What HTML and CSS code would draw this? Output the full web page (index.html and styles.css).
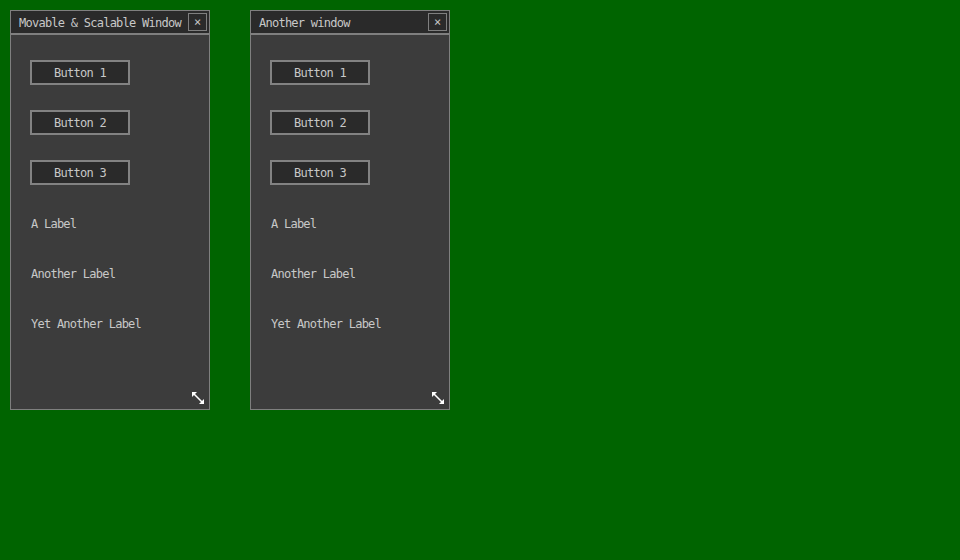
FILE: index.html
```html
<!DOCTYPE html>
<html lang="en">
  <head>
    <meta charset="UTF-8" />
    <title>Windows</title>
    <link rel="stylesheet" href="styles.css">
  </head>
  <body>
    <div class="window win-1">
      <div class="titlebar">
        <span class="title">Movable &amp; Scalable Window</span>
        <span class="close">×</span>
      </div>
      <div class="content">
        <div class="button">Button 1</div>
        <div class="button">Button 2</div>
        <div class="button">Button 3</div>
        <div class="label">A Label</div>
        <div class="label">Another Label</div>
        <div class="label">Yet Another Label</div>
      </div>
      <svg class="resize" width="12" height="12" viewBox="0 0 12 12">
        <line x1="2" y1="2" x2="10" y2="10" stroke="#fff" stroke-width="1.6" />
        <polygon points="0,0 5,0 0,5" fill="#fff" />
        <polygon points="12,12 7,12 12,7" fill="#fff" />
      </svg>
    </div>

    <div class="window win-2">
      <div class="titlebar">
        <span class="title">Another window</span>
        <span class="close">×</span>
      </div>
      <div class="content">
        <div class="button">Button 1</div>
        <div class="button">Button 2</div>
        <div class="button">Button 3</div>
        <div class="label">A Label</div>
        <div class="label">Another Label</div>
        <div class="label">Yet Another Label</div>
      </div>
      <svg class="resize" width="12" height="12" viewBox="0 0 12 12">
        <line x1="2" y1="2" x2="10" y2="10" stroke="#fff" stroke-width="1.6" />
        <polygon points="0,0 5,0 0,5" fill="#fff" />
        <polygon points="12,12 7,12 12,7" fill="#fff" />
      </svg>
    </div>
  </body>
</html>
```

FILE: styles.css
```css
body {
  margin: 0;
  width: 960px;
  height: 560px;
  background: #006400;
  font-family: "DejaVu Sans Mono", monospace;
  font-size: 12px;
  letter-spacing: -0.75px;
  color: #c8c8c8;
  position: relative;
  overflow: hidden;
}

.window {
  position: absolute;
  top: 10px;
  width: 200px;
  height: 400px;
  box-sizing: border-box;
  border: 1px solid #7f7f7f;
  background: #3c3c3c;
  display: flex;
  flex-direction: column;
}

.win-1 {
  left: 10px;
}

.win-2 {
  left: 250px;
}

.titlebar {
  height: 22px;
  flex: none;
  background: #2a2a2a;
  border-bottom: 2px solid #7f7f7f;
  display: flex;
  align-items: center;
  justify-content: space-between;
  padding: 0 2px 0 8px;
}

.title {
  white-space: nowrap;
  padding-top: 2px;
}

.close {
  width: 17px;
  height: 16px;
  border: 1px solid #7f7f7f;
  display: flex;
  align-items: center;
  justify-content: center;
  letter-spacing: 0;
  font-size: 12px;
  line-height: 1;
}

.content {
  display: flex;
  flex-direction: column;
  align-items: flex-start;
  gap: 25px;
  padding: 25px 19px;
}

.button {
  width: 100px;
  height: 25px;
  box-sizing: border-box;
  border: 2px solid #828282;
  background: #2a2a2a;
  display: flex;
  align-items: center;
  justify-content: center;
  padding-top: 1px;
}

.label {
  height: 25px;
  box-sizing: border-box;
  line-height: 25px;
  padding: 2px 0 0 1px;
}

.resize {
  position: absolute;
  right: 5px;
  bottom: 5px;
}
```
